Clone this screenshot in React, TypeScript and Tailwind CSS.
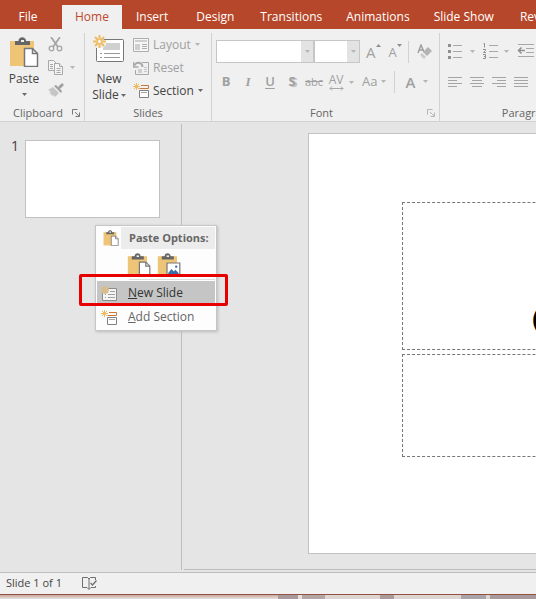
import type { ReactNode } from "react";

type IconProps = { className?: string };

const tabs = [
  { name: "File", className: "w-[62px] pr-1.5" },
  { name: "Home", className: "bg-[#f0f0f0] px-[13px] text-[#c0492b]" },
  { name: "Insert", className: "px-3.5" },
  { name: "Design", className: "px-3.5" },
  { name: "Transitions", className: "px-3" },
  { name: "Animations", className: "px-3" },
  { name: "Slide Show", className: "px-3" },
  { name: "Review", className: "px-3.5" },
];

/* ── Small pieces ── */

function Caret({ className = "fill-[#6a6a6a]" }: IconProps) {
  return (
    <svg width="5" height="3" viewBox="0 0 5 3" className={`shrink-0 ${className}`}>
      <path d="M0 0h5L2.500 3z" />
    </svg>
  );
}

function Launcher({ className = "stroke-[#777]" }: IconProps) {
  return (
    <svg width="8" height="8" viewBox="0 0 8 8" fill="none" className={className}>
      <path d="M.5 5.500V.5h5M3 3l4 4M7.500 3.500v4h-4" />
    </svg>
  );
}

/* ── Icons ── */

function ClipboardIcon({ size, picture }: { size: number; picture?: boolean }) {
  return (
    <svg width={size} height={size} viewBox="0 0 30 30" fill="none">
      <path d="M1 4h24v25H1z" fill="#eec477" />
      <path d="M6 8V4h3.500c0-5 7.500-5 7.500 0H21v4z" fill="#666" />
      <path d="M12 3h3v2h-3z" fill="#f0f0f0" />
      {picture ? (
        <>
          <path d="M12.500 12.500h16v17h-16z" fill="#fff" stroke="#777" strokeWidth="1.500" />
          <path d="M14 28v-3l4-5 3 3 2-2 4 4v3z" fill="#3a6ea8" />
          <circle cx="24" cy="17" r="1.500" fill="#3a6ea8" />
        </>
      ) : (
        <>
          <path d="M15.500 11.500h8l5 5v13h-13z" fill="#fff" stroke="#777" strokeWidth="1.500" />
          <path d="M23.500 11.500v5h5" stroke="#777" strokeWidth="1.500" />
        </>
      )}
    </svg>
  );
}

function ScissorsIcon() {
  return (
    <svg width="15" height="15" viewBox="0 0 15 15" fill="none" stroke="#a5a5a5">
      <path d="M3 0l7 10M12 0L5 10" strokeWidth="1.800" />
      <circle cx="3.500" cy="11.500" r="2.300" strokeWidth="1.300" />
      <circle cx="11.500" cy="11.500" r="2.300" strokeWidth="1.300" />
    </svg>
  );
}

function CopyIcon() {
  return (
    <svg width="16" height="15" viewBox="0 0 16 15" fill="#f4f4f4" stroke="#a8a8a8">
      <path d="M.5.5h5l3 3v7h-8z" />
      <path d="M2 4.500h3M2 6.500h3M2 8.500h3" />
      <path d="M6.500 3.500h5l3 3v8h-8z" />
      <path d="M11.500 3.500v3h3M8.500 8.500h4M8.500 10.500h4M8.500 12.500h4" />
    </svg>
  );
}

function BrushIcon() {
  return (
    <svg width="16" height="14" viewBox="0 0 16 14">
      <path d="M10 4l4-4 2 2-4 4z" fill="#a0a0a0" />
      <path d="M6 3l2-1 6 6-1 2z" fill="#a0a0a0" />
      <path d="M5 4l6 6-4 4-2-2-1 1-1-2-2-1 2-1-3-2z" fill="#c6c6c6" />
    </svg>
  );
}

function NewSlideIcon() {
  return (
    <svg width="32" height="28" viewBox="0 0 32 28" fill="none">
      <rect x="3.500" y="4.500" width="27" height="22" rx="1" fill="#fff" stroke="#777" />
      <path d="M10 8h17v7H10z" fill="#d0d0d0" />
      <path d="M7 18.500h2M11 18.500h16M7 22.500h2M11 22.500h16" stroke="#999" />
      <path d="M0 4h10l3 2v4l-3 3H0z" fill="#f0f0f0" />
      <path
        d="M6.500 0v13M0 6.500h13M2 2l9 9M11 2l-9 9"
        stroke="#eebb60"
        strokeWidth="2"
      />
      <circle cx="6.500" cy="6.500" r="2" fill="#fff" stroke="#eebb60" />
    </svg>
  );
}

function LayoutIcon() {
  return (
    <svg width="16" height="14" viewBox="0 0 16 14" fill="none" stroke="#adadad">
      <path d="M.5.5h15v13H.5z" fill="#f6f6f6" />
      <path d="M2 3.500h12M2 2.500h12" stroke="#cfcfcf" />
      <path d="M2 6h5v6H2z" fill="#cfcfcf" stroke="none" />
      <path d="M9 6.500h5M9 8.500h5M9 10.500h5" />
    </svg>
  );
}

function ResetIcon() {
  return (
    <svg width="16" height="14" viewBox="0 0 16 14" fill="none" stroke="#a8a8a8">
      <path d="M9 1.500h6.500v12H2.500V9" />
      <path d="M5 8h4v4H5z" fill="#cfcfcf" stroke="none" />
      <path d="M11 6.500h3M11 8.500h3M11 10.500h3" stroke="#c6c6c6" />
      <path d="M1.500 4.500C3 .5 9 .5 9.500 6" strokeWidth="2" />
      <path d="M.5 1v5h5" strokeWidth="1.500" />
    </svg>
  );
}

function SectionIcon({ className }: IconProps) {
  return (
    <svg width="16" height="15" viewBox="0 0 16 15" fill="none" className={className}>
      <path d="M3.500 0v7M0 3.500h7M1 1l5 5M6 1L1 6" stroke="#eebb60" />
      <path d="M8 2.500h7.500v3H6.500" stroke="#c9773b" />
      <path d="M6.500 7.500h9v7h-9z" fill="#fff" stroke="#808080" />
      <path d="M8 9.500h6" stroke="#a5a5a5" />
    </svg>
  );
}

function NewSlideSmallIcon() {
  return (
    <svg width="17" height="15" viewBox="0 0 17 15" fill="none">
      <path d="M1.500 2.500h14v12h-14z" fill="#f4f4f4" stroke="#8c8c8c" />
      <path d="M4 8.500h1M7 8.500h7M4 11.500h1M7 11.500h7M9 5.500h5" stroke="#a0a0a0" />
      <path d="M4 0l3 1 1 3-1 3-3 1-3-1-1-3 1-3z" fill="#d9bd8c" />
    </svg>
  );
}

function EraserIcon() {
  return (
    <svg width="15" height="15" viewBox="0 0 15 15" fill="none">
      <path d="M1 9l3-8 3 7M2 6h4" stroke="#a0a0a0" strokeWidth="1.500" />
      <path d="M11 3l4 4-5 5-4-4z" fill="#b4b4b4" />
      <path d="M5 9l4 4-2 2-4-4z" fill="#cacaca" />
    </svg>
  );
}

function BulletsIcon() {
  return (
    <svg width="14" height="15" viewBox="0 0 14 15" stroke="#a8a8a8" fill="#8f8f8f">
      <path d="M5 1.500h9M5 7.500h9M5 13.500h9" />
      <path d="M0 0h3v3H0zM0 6h3v3H0zM0 12h3v3H0z" stroke="none" />
    </svg>
  );
}

function NumberingIcon() {
  return (
    <svg width="15" height="16" viewBox="0 0 15 16" fill="none" stroke="#a8a8a8">
      <path d="M6 2.500h9M6 8.500h9M6 14.500h9" />
      <path
        d="M.5.5h1v4M0 6.500h2.500v1L.5 9.500h2.500M0 11.500h2.500v4H0M1 13.500h1.500"
        stroke="#8f8f8f"
      />
    </svg>
  );
}

function OutdentIcon() {
  return (
    <svg width="17" height="14" viewBox="0 0 17 14" fill="none" stroke="#a8a8a8">
      <path d="M1 .5h16M9 4.500h8M9 8.500h8M1 12.500h16" />
      <path d="M8 6.500H2M4.500 3.500l-3 3 3 3" stroke="#8f8f8f" strokeWidth="1.500" />
    </svg>
  );
}

const alignments = [
  { label: "Align left", d: "M0 .5h14M0 3.500h9M0 6.500h14M0 9.500h9" },
  { label: "Center", d: "M0 .5h14M2 3.500h10M0 6.500h14M2 9.500h10" },
  { label: "Align right", d: "M0 .5h14M5 3.500h9M0 6.500h14M5 9.500h9" },
  { label: "Justify", d: "M0 .5h14M0 3.500h14M0 6.500h14M0 9.500h14" },
];

function SpellingIcon() {
  return (
    <svg width="15" height="13" viewBox="0 0 15 13" fill="none" stroke="#6f6f6f">
      <path d="M3 .5H.5v10H5l2 2 2-2h4.500V9M3 .5h2.500l1.500 1.500V12M7 2L8.500.5h5V3" />
      <path d="M8.500 6l2 2 4-4.500" strokeWidth="1.300" />
    </svg>
  );
}

/* ── Ribbon ── */

type GroupProps = {
  title: string;
  launcher?: ReactNode;
  className: string;
  children: ReactNode;
};

function Group({ title, launcher, className, children }: GroupProps) {
  return (
    <section
      aria-label={title}
      className={`mt-1 flex shrink-0 flex-col border-r border-[#d2d2d2] ${className}`}
    >
      <div className="h-[72px]">{children}</div>
      <div className="flex h-4 items-center px-1 text-[11px] leading-4 text-[#666]">
        <span className="flex-1 text-center">{title}</span>
        {launcher && (
          <button aria-label={`${title} settings`}>{launcher}</button>
        )}
      </div>
    </section>
  );
}

function Ribbon() {
  return (
    <div className="flex overflow-hidden border-b border-[#d2d2d2] bg-[#f0f0f0]">
      <Group title="Clipboard" launcher={<Launcher />} className="w-[85px]">
        <div className="flex pl-2 pt-1">
          <button className="flex w-8 flex-col items-center">
            <ClipboardIcon size={30} />
            <span className="leading-6 text-[#444]">Paste</span>
            <Caret className="mt-0.5 fill-[#6a6a6a]" />
          </button>
          <div className="ml-2 flex flex-col gap-2">
            <button aria-label="Cut">
              <ScissorsIcon />
            </button>
            <button aria-label="Copy" className="flex items-center gap-1.5">
              <CopyIcon />
              <Caret className="fill-[#b5b5b5]" />
            </button>
            <button aria-label="Format painter">
              <BrushIcon />
            </button>
          </div>
        </div>
      </Group>

      <Group title="Slides" className="w-[127px]">
        <div className="flex">
          <button className="flex w-12 flex-col items-center pt-0.5 text-[#444]">
            <NewSlideIcon />
            <span className="mt-2 leading-4">New</span>
            <span className="flex items-center gap-0.5 leading-4">
              Slide <Caret />
            </span>
          </button>
          <div className="flex flex-col leading-[23px] text-[#a0a0a0]">
            <button className="flex items-center gap-1">
              <LayoutIcon /> Layout <Caret className="fill-[#b5b5b5]" />
            </button>
            <button className="flex items-center gap-1">
              <ResetIcon /> Reset
            </button>
            <button className="flex items-center gap-1 text-[#444]">
              <SectionIcon /> Section <Caret />
            </button>
          </div>
        </div>
      </Group>

      <Group
        title="Font"
        launcher={<Launcher className="stroke-[#b5b5b5]" />}
        className="w-[228px]"
      >
        <div className="flex items-center pl-1 pt-[7px] text-[#a0a0a0]">
          <div className="flex h-[23px] w-[98px] border border-[#c6c6c6] bg-white">
            <input aria-label="Font name" className="min-w-0 flex-1 outline-none" />
            <button aria-label="Font list" className="grid w-3 place-items-center bg-[#e3e3e3]">
              <Caret className="fill-[#b5b5b5]" />
            </button>
          </div>
          <div className="flex h-[23px] w-[46px] border border-[#c6c6c6] bg-white">
            <input aria-label="Font size" className="min-w-0 flex-1 outline-none" />
            <button aria-label="Size list" className="grid w-3 place-items-center bg-[#e3e3e3]">
              <Caret className="fill-[#b5b5b5]" />
            </button>
          </div>
          <button aria-label="Increase font size" className="ml-1.5 flex text-[15px] leading-5">
            A
            <svg width="5" height="3" className="mt-0.5 fill-[#8f8f8f]">
              <path d="M0 3h5L2.500 0z" />
            </svg>
          </button>
          <button aria-label="Decrease font size" className="ml-2 flex text-[13px] leading-5">
            A
            <Caret className="mt-0.5 fill-[#8f8f8f]" />
          </button>
          <span className="ml-1.5 h-[22px] w-px bg-[#d2d2d2]" />
          <button aria-label="Clear formatting" className="ml-2">
            <EraserIcon />
          </button>
        </div>
        <div className="mt-2 flex h-[22px] items-center pl-[3px] text-[13px] text-[#a0a0a0]">
          <button className="w-[22px] font-bold">B</button>
          <button className="w-[22px] font-['Liberation_Serif',serif] font-bold italic">I</button>
          <button className="w-[22px] font-semibold underline underline-offset-2">U</button>
          <button className="w-[22px] font-bold [text-shadow:2px_1px_1px_#bbb]">S</button>
          <button className="w-[22px] text-[11px] line-through">abc</button>
          <button aria-label="Character spacing" className="flex items-center gap-0.5">
            <span className="flex w-[22px] flex-col items-center text-xs leading-3">
              AV
              <svg width="15" height="5" viewBox="0 0 15 5" fill="none" stroke="#a8a8a8">
                <path d="M1 2.500h13M3 .5l-2 2 2 2M12 .5l2 2-2 2" />
              </svg>
            </span>
            <Caret className="fill-[#b5b5b5]" />
          </button>
          <button className="ml-2 flex items-center gap-1">
            Aa <Caret className="fill-[#b5b5b5]" />
          </button>
          <span className="ml-2 h-[22px] w-px bg-[#d2d2d2]" />
          <button aria-label="Font color" className="ml-2.5 flex items-center gap-2 text-[15px] font-semibold">
            A <Caret className="fill-[#b5b5b5]" />
          </button>
        </div>
      </Group>

      <Group title="Paragraph" className="w-[178px]">
        <div className="flex items-center pl-2 pt-2.5">
          <button aria-label="Bullets" className="flex items-center gap-2">
            <BulletsIcon />
            <Caret className="fill-[#b5b5b5]" />
          </button>
          <button aria-label="Numbering" className="ml-2 flex items-center gap-1.5">
            <NumberingIcon />
            <Caret className="fill-[#b5b5b5]" />
          </button>
          <button aria-label="Decrease indent" className="ml-2">
            <OutdentIcon />
          </button>
        </div>
        <div className="mt-[18px] flex gap-2 pl-2">
          {alignments.map((item) => (
            <button key={item.label} aria-label={item.label}>
              <svg width="14" height="10" viewBox="0 0 14 10" stroke="#a5a5a5">
                <path d={item.d} />
              </svg>
            </button>
          ))}
        </div>
      </Group>
    </div>
  );
}

/* ── Context menu ── */

function ContextMenu() {
  return (
    <div
      role="menu"
      className="absolute left-[95px] top-[103px] w-[122px] border border-[#c6c6c6] bg-[#fdfdfd] p-px text-[#666] shadow-[1px_1px_3px_#bbb]"
    >
      <div className="flex h-[22px] items-center">
        <span className="grid w-6 place-items-center pl-1">
          <ClipboardIcon size={16} />
        </span>
        <span className="h-full flex-1 whitespace-nowrap bg-[#ececec] pl-2 text-[11px] font-bold leading-[22px]">
          Paste Options:
        </span>
      </div>
      <div className="flex gap-1.5 pb-0.5 pl-[30px] pt-1">
        <button role="menuitem" aria-label="Use destination theme">
          <ClipboardIcon size={24} />
        </button>
        <button role="menuitem" aria-label="Picture">
          <ClipboardIcon size={24} picture />
        </button>
      </div>
      <div className="ml-8 h-px bg-[#dedede]" />
      <button
        role="menuitem"
        className="mt-px flex h-6 w-full items-center gap-2.5 bg-[#c5c5c5] pl-1 text-[#333]"
      >
        <NewSlideSmallIcon />
        <span>
          <u>N</u>ew Slide
        </span>
      </button>
      <button role="menuitem" className="flex h-6 w-full items-center gap-2.5 pl-1">
        <SectionIcon className="mr-px" />
        <span>
          <u>A</u>dd Section
        </span>
      </button>
      <div className="pointer-events-none absolute -left-[17px] top-12 h-8 w-[149px] rounded-xs border-3 border-[#e60000]" />
    </div>
  );
}

/* ── App ── */

export default function App() {
  return (
    <div className="flex min-h-screen flex-col overflow-hidden bg-[#e5e5e5] font-['Open_Sans','Noto_Sans',sans-serif] text-xs">
      <nav className="flex h-[29px] items-end overflow-hidden bg-[#b7472a] text-white">
        {tabs.map((tab) => (
          <button key={tab.name} className={`h-6 shrink-0 ${tab.className}`}>
            {tab.name}
          </button>
        ))}
      </nav>

      <Ribbon />

      <main className="relative flex flex-1 pb-0.5 pt-0.5">
        <aside className="flex w-[182px] shrink-0 items-start border-r border-[#bdbdbd] pl-[11px] pt-4">
          <span className="w-3.5 text-sm leading-3 text-[#444]">1</span>
          <button
            aria-label="Slide 1"
            className="h-[78px] w-[135px] border border-[#c2c2c2] bg-white"
          />
        </aside>

        <div className="ml-0.5 flex-1 overflow-hidden border-b border-[#bdbdbd] pb-3.5 pl-[124px] pt-[9px]">
          <div className="flex h-[421px] w-[748px] flex-col gap-1 border border-[#c2c2c2] bg-white px-[93px] pt-[68px]">
            <div className="flex h-[148px] items-end justify-center border border-dashed border-[#777] pb-1 font-[Lato] text-[42px] leading-[50px] text-black">
              Click to add title
            </div>
            <div className="h-[103px] border border-dashed border-[#777]" />
          </div>
        </div>

        <ContextMenu />
      </main>

      <footer>
        <div className="flex h-[22px] items-center gap-5 border-t border-[#bdbdbd] bg-[#f0f0f0] pl-1.5 text-[11px] text-[#444]">
          <span>Slide 1 of 1</span>
          <button aria-label="Spelling">
            <SpellingIcon />
          </button>
        </div>
        <div className="flex h-[5px] border-t border-[#93513f] bg-[#ddd5d1]">
          <div className="w-[278px] bg-linear-to-b from-[#c9a9a0] to-[#e6e2de]" />
          <div className="w-5 bg-[#a89a9c]" />
          <div className="w-1 bg-[#e6dedb]" />
          <div className="w-[23px] bg-[#b3a7a6]" />
          <div className="ml-[55px] w-3.5 bg-[#aa9c9c]" />
          <div className="ml-[67px] w-[25px] bg-[#aaa3aa]" />
          <div className="ml-1 flex-1 bg-[#a79b9e]" />
        </div>
      </footer>
    </div>
  );
}
